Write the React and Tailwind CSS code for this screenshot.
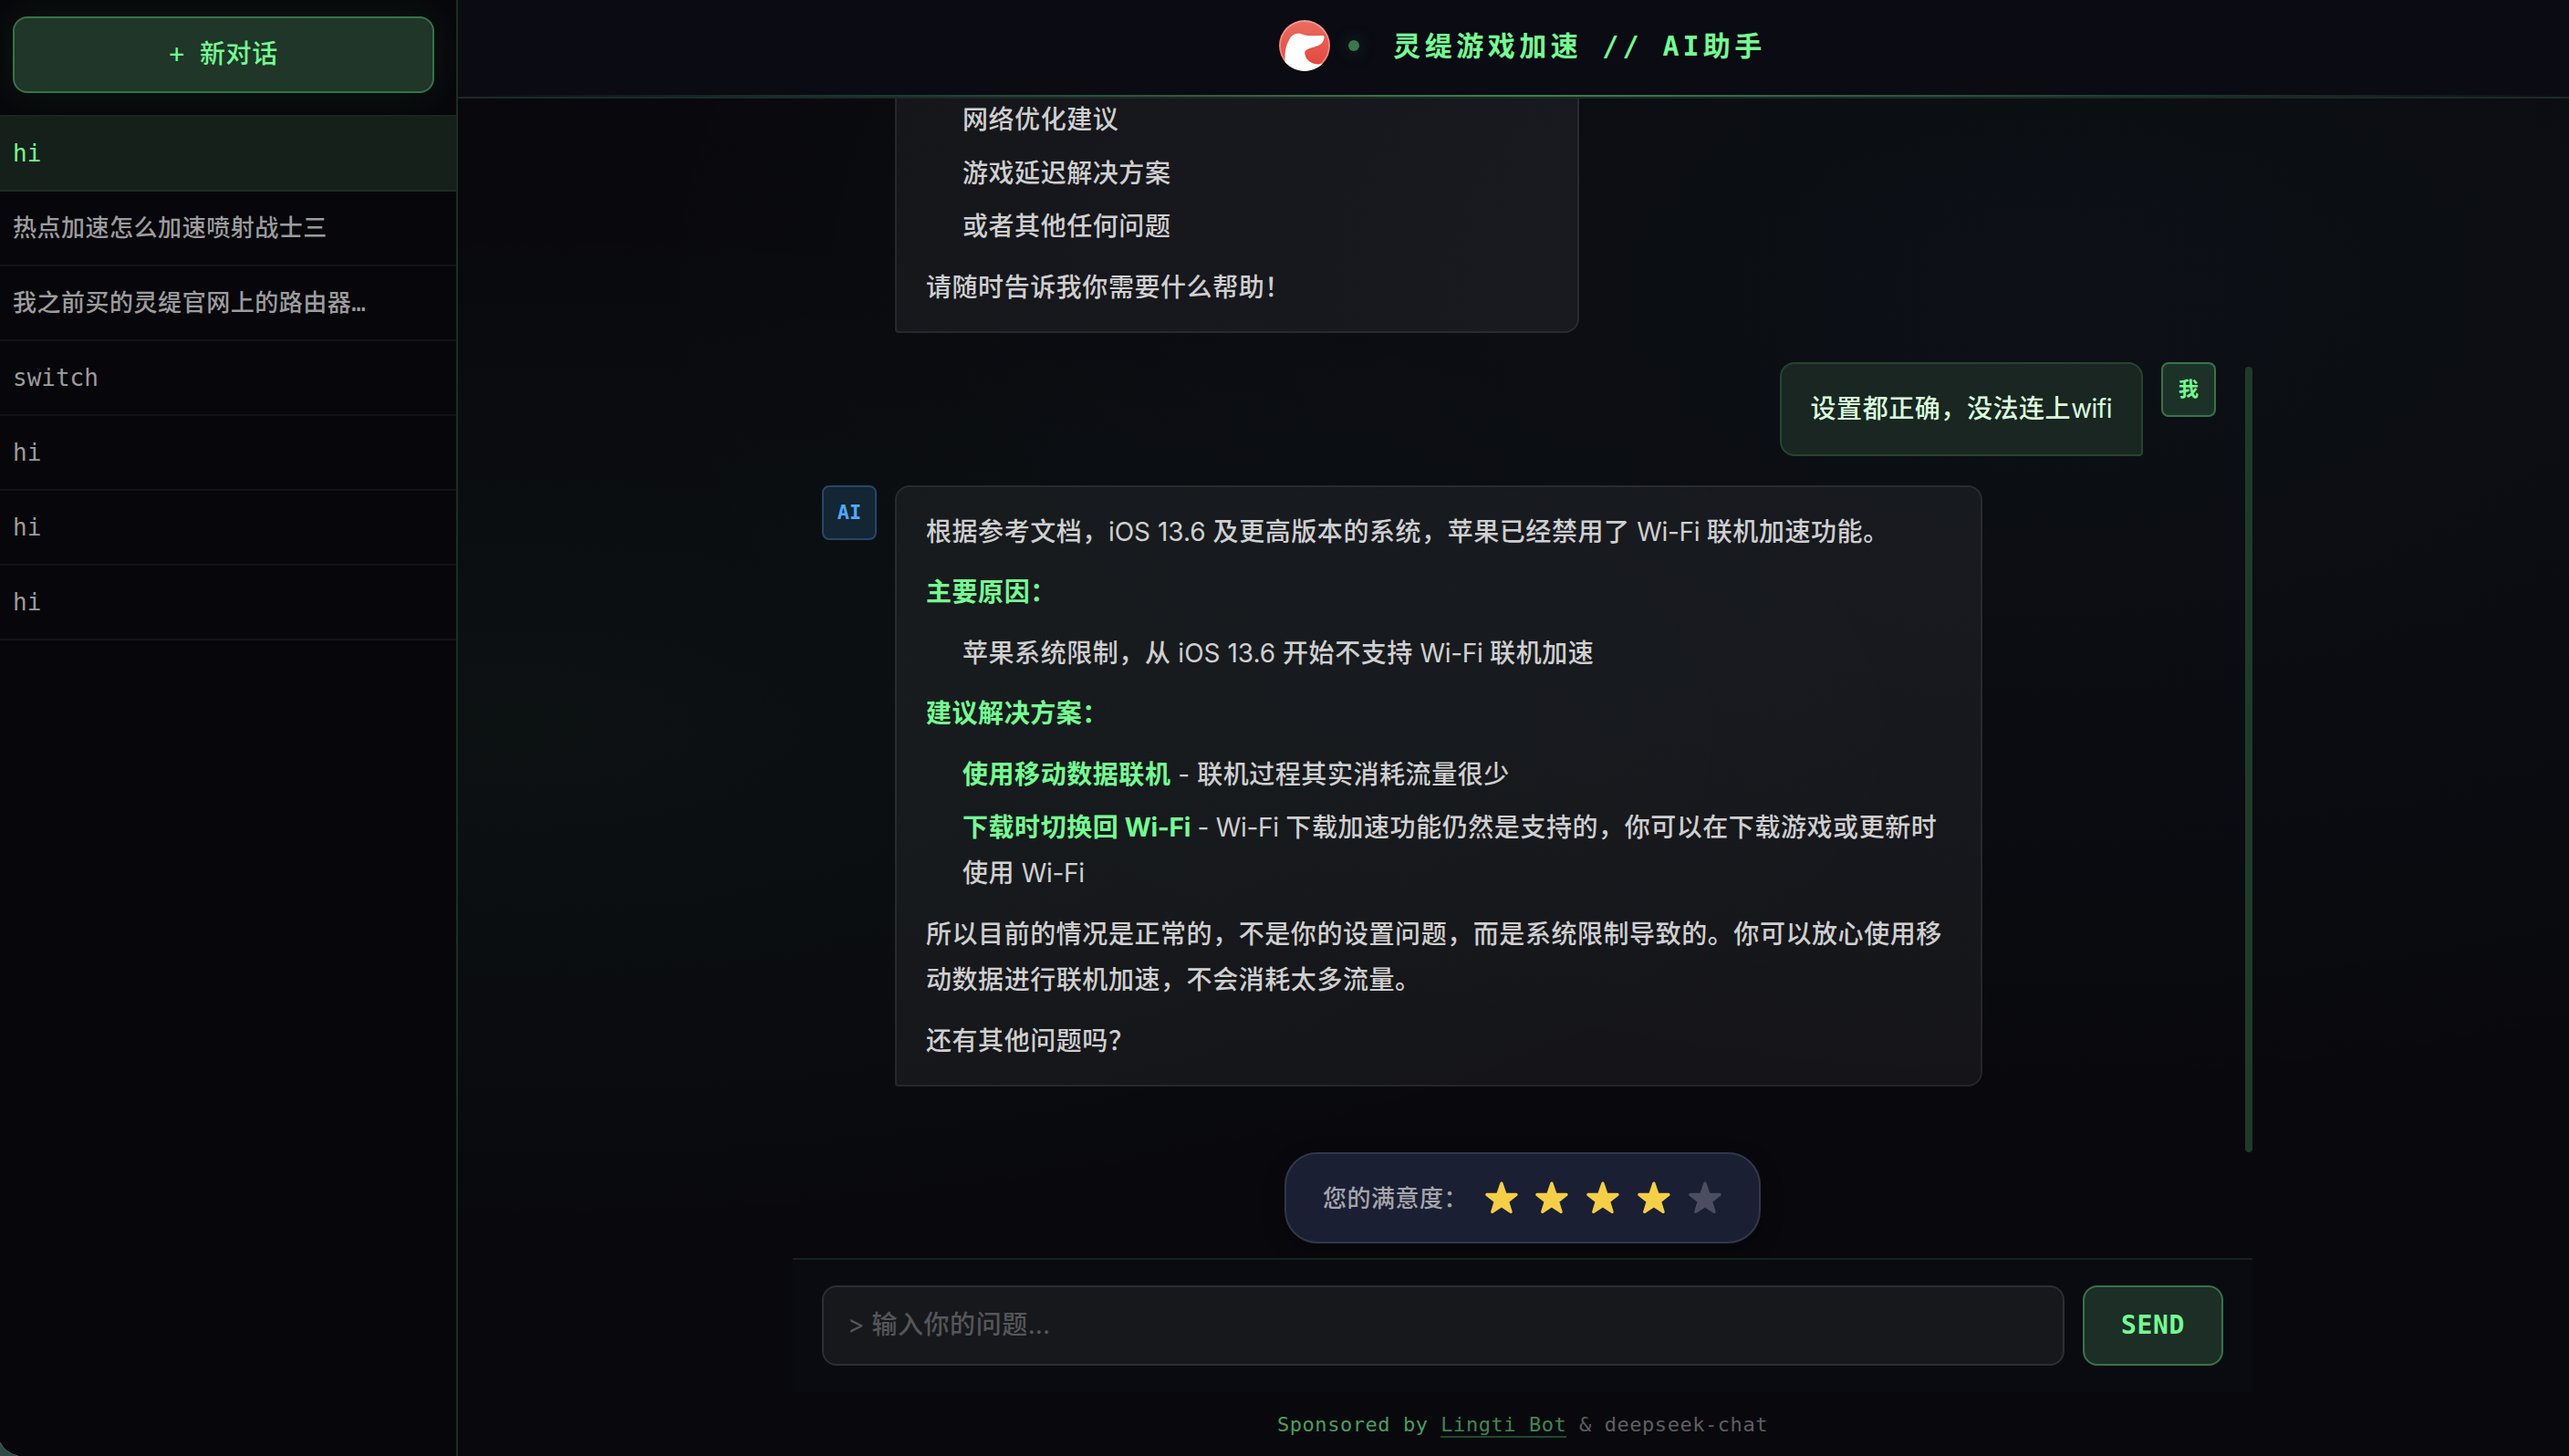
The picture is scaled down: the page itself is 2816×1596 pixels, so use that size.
import React from "react";

const sans = "font-['Inter','Noto_Sans_CJK_SC',sans-serif]";
const mono = "font-['DejaVu_Sans_Mono','Noto_Sans_CJK_SC',monospace]";

/* Splits mixed text so Latin runs and CJK runs carry their own tracking and weight. */
function Mixed({ children, latin = "tracking-normal", cjk = "tracking-[0.02em] font-medium" }) {
  const runs = children.match(/[\u0020-\u007e\u2026]+|[^\u0020-\u007e\u2026]+/g) || [];
  return runs.map((run, i) => {
    let style = cjk;
    if (/^[\u0020-\u007e\u2026]/.test(run)) style = latin;
    if (run.includes("Wi-Fi")) style = "tracking-[-0.3px]";
    if (run.includes("wifi")) style = "tracking-[-0.5px]";
    return (
      <span key={i} className={style}>
        {run}
      </span>
    );
  });
}

const chats = ["hi", "热点加速怎么加速喷射战士三", "我之前买的灵缇官网上的路由器…", "switch", "hi", "hi", "hi"];

function Sidebar() {
  return (
    <aside className={`${mono} flex h-full w-[502px] shrink-0 flex-col border-r-2 border-[#1c2e22] bg-[#07070b]`}>
      <div className="h-[128px] shrink-0 border-b-2 border-[#18281e] pt-[18px] pr-[24px] pl-[14px]">
        <button className="flex h-[84px] w-full items-center justify-center rounded-[16px] border-2 border-[#37734a] bg-[#1f3628] text-[28px] font-medium text-[#75fb92] shadow-[0_0_40px_rgba(117,251,146,0.08)]">
          <span className="whitespace-pre"><Mixed>+ 新对话</Mixed></span>
        </button>
      </div>
      <ul>
        {chats.map((chat, i) => (
          <li
            key={i}
            className={
              i === 0
                ? "flex h-[82px] items-center border-b-2 border-[#1f2b25] bg-[#15201a] pl-[14px] text-[26px] text-[#75fb92]"
                : "flex h-[82px] items-center border-b-2 border-[#131317] pl-[14px] text-[26px] text-[#9c9c9e]"
            }
          >
            <span className="whitespace-pre"><Mixed>{chat}</Mixed></span>
          </li>
        ))}
      </ul>
    </aside>
  );
}

function Logo() {
  return (
    <svg viewBox="0 0 56 56" className="size-[56px]">
      <defs>
        <linearGradient id="coral" x1="0" y1="0" x2="0" y2="1">
          <stop offset="0" stopColor="#ea6e60" />
          <stop offset="1" stopColor="#e3413a" />
        </linearGradient>
        <clipPath id="disc"><circle cx="28" cy="28" r="28" /></clipPath>
      </defs>
      <g clipPath="url(#disc)">
        <rect width="56" height="56" fill="url(#coral)" />
        <circle cx="28" cy="28" r="27" fill="none" stroke="#fff" strokeOpacity="0.3" strokeWidth="2" />
        <path d="M6.500 56V39C6.500 31 9.500 23.500 13 18.500C16 14.500 22 13.500 28 16.500C34 18 41 16.500 48.500 17C50.500 18 49.500 21.500 47.500 24.500C45 28 40 29 35 30.500C31 31.700 28 33.500 28.200 36.500C29 42 33 46.500 39 48C42.500 48.800 45 48.300 48 47.500L48 56Z" fill="#fff" />
      </g>
    </svg>
  );
}

function Header() {
  return (
    <header className="relative flex h-[108px] shrink-0 items-center justify-center border-b-2 border-[#1c2a25] bg-[#0a0b13] pb-[6px]">
      <Logo />
      <span className="ml-[20px] size-[12px] rounded-full bg-[#3b774c] shadow-[0_0_20px_rgba(117,251,146,0.25)]" />
      <h1 className={`${mono} ml-[37px] text-[30px] font-bold whitespace-pre text-[#75fb92]`}>
        <Mixed latin="tracking-[4px]" cjk="tracking-[4.5px]">灵缇游戏加速 // AI助手</Mixed>
      </h1>
      <div className="absolute inset-x-0 bottom-0 h-[2px] bg-linear-to-r from-transparent via-[#3f8053] to-transparent" />
    </header>
  );
}

function Avatar({ label, user }) {
  return (
    <div
      className={`${mono} flex size-[60px] shrink-0 items-center justify-center rounded-[8px] border-2 text-[22px] font-bold ${
        user ? "border-[#37734a] bg-[#1c3228] text-[#75fb92]" : "border-[#24476a] bg-[#142533] text-[#4fa8ff]"
      }`}
    >
      {label}
    </div>
  );
}

function P({ children }) {
  return <p className="text-[28px] leading-[50.4px]">{children}</p>;
}

function Strong({ children }) {
  return <strong className="font-bold text-[#75fb92]"><Mixed cjk="tracking-[0.02em]">{children}</Mixed></strong>;
}

function Bubble({ className, children }) {
  return (
    <div className={`flex flex-col gap-4 rounded-[16px] rounded-bl-[4px] border-2 border-white/8 bg-[#fffdf8]/5 px-[32px] pt-[24px] pb-[23px] text-[#cfcfd0] ${className}`}>
      {children}
    </div>
  );
}

function Messages() {
  return (
    <section className={`${sans} relative flex h-[1155px] shrink-0 flex-col justify-end gap-[32px] overflow-hidden px-[32px] pb-[72px]`}>
      <div className="flex gap-[20px]">
        <div className="w-[60px] shrink-0" />
        <Bubble className="w-[750px]">
          <ul className="flex flex-col gap-2 pl-[40px]">
            <li><P><Mixed>网络优化建议</Mixed></P></li>
            <li><P><Mixed>游戏延迟解决方案</Mixed></P></li>
            <li><P><Mixed>或者其他任何问题</Mixed></P></li>
          </ul>
          <P><Mixed>请随时告诉我你需要什么帮助！</Mixed></P>
        </Bubble>
      </div>

      <div className="flex justify-end gap-[20px] pr-[8px]">
        <div className="rounded-[16px] rounded-br-[4px] border-2 border-[#254630] bg-[#192621] px-[32px] py-[24px] text-[28px] leading-[51px] text-[#d9fedc]">
          <Mixed>设置都正确，没法连上wifi</Mixed>
        </div>
        <Avatar label="我" user />
      </div>

      <div className="flex gap-[20px]">
        <Avatar label="AI" />
        <Bubble className="w-[1192px]">
          <P><Mixed>根据参考文档，iOS 13.6 及更高版本的系统，苹果已经禁用了 Wi-Fi 联机加速功能。</Mixed></P>
          <P><Strong>主要原因：</Strong></P>
          <ul className="pl-[40px]">
            <li><P><Mixed>苹果系统限制，从 iOS 13.6 开始不支持 Wi-Fi 联机加速</Mixed></P></li>
          </ul>
          <P><Strong>建议解决方案：</Strong></P>
          <ul className="flex flex-col gap-2 pl-[40px]">
            <li><P><Strong>使用移动数据联机</Strong><Mixed>{" - 联机过程其实消耗流量很少"}</Mixed></P></li>
            <li>
              <P>
                <Strong>下载时切换回 Wi-Fi</Strong>
                <Mixed>{" - Wi-Fi 下载加速功能仍然是支持的，你可以在下载游戏或更新时"}</Mixed>
                <br />
                <Mixed>使用 Wi-Fi</Mixed>
              </P>
            </li>
          </ul>
          <P>
            <Mixed>所以目前的情况是正常的，不是你的设置问题，而是系统限制导致的。你可以放心使用移</Mixed>
            <br />
            <Mixed>动数据进行联机加速，不会消耗太多流量。</Mixed>
          </P>
          <P><Mixed>还有其他问题吗？</Mixed></P>
        </Bubble>
      </div>

      <div className="absolute right-0 bottom-0 h-[861px] w-[8px] rounded-full bg-[#203a2a]" />
    </section>
  );
}

function Star({ on }) {
  return (
    <svg viewBox="0 0 40 40" className="h-[40px] w-[39.8px]">
      <path
        d="M20 5L24.200 17.200L36.200 17.400L26.700 25L30.300 36.500L20 29.700L9.700 36.500L13.300 25L3.800 17.400L15.800 17.200Z"
        fill={on ? "#f4cf47" : "#4b4d60"}
        stroke={on ? "#f4cf47" : "#4b4d60"}
        strokeWidth="3.200"
        strokeLinejoin="round"
      />
    </svg>
  );
}

function Rating() {
  return (
    <div className={`${sans} mb-[16px] flex h-[100px] w-[522px] shrink-0 items-center self-center rounded-[36px] border-2 border-[#33364c] bg-[#1b1f33] pl-[40px] shadow-[0_8px_24px_rgba(0,0,0,0.3)]`}>
      <span className="w-[175.500px] text-[26px] whitespace-nowrap text-[#a4a5ac]"><Mixed>您的满意度：</Mixed></span>
      <div className="mb-[3px] flex gap-4">
        <Star on /><Star on /><Star on /><Star on /><Star />
      </div>
    </div>
  );
}

function Composer() {
  return (
    <div className="flex h-[146px] shrink-0 gap-[20px] border-t-2 border-[#14231e] bg-[#0a0b10] px-[32px] pt-[28px]">
      <div className={`${sans} flex h-[88px] w-[1362px] items-center rounded-[16px] border-2 border-[#2d2e33] bg-[#17181c] pb-[2px] pl-[26px] text-[28px] text-[#55565a]`}>
        <span className="whitespace-pre"><Mixed>{"> 输入你的问题..."}</Mixed></span>
      </div>
      <button className={`${mono} h-[88px] w-[154px] rounded-[16px] border-2 border-[#37734a] bg-[#1c2e25] text-[28px] font-bold tracking-[0.6px] text-[#75fb92]`}>
        SEND
      </button>
    </div>
  );
}

export default function App() {
  return (
    <div className="relative flex h-[1596px] w-[2816px] overflow-hidden bg-[#09090d] bg-[radial-gradient(ellipse_at_20%_50%,rgba(100,240,170,0.035),transparent_50%),radial-gradient(ellipse_at_80%_20%,rgba(100,190,240,0.04),transparent_50%)]">
      <Sidebar />
      <main className="flex w-[2334px] shrink-0 flex-col">
        <Header />
        <div className="flex w-[1600px] flex-col self-center">
          <Messages />
          <Rating />
          <Composer />
        </div>
        <footer className={`${mono} pt-[20px] text-center text-[22px] leading-[34px] tracking-[0.55px] whitespace-pre text-[#5f5f62]`}>
          <p>
            <span className="text-[#4a9e60]">Sponsored by </span>
            <a className="border-b-2 border-[#1f4a2e] text-[#3f8653]">Lingti Bot</a>
            <span> &amp; deepseek-chat</span>
          </p>
        </footer>
      </main>
      {/* rounded window corner */}
      <svg viewBox="0 0 20 16" className="absolute bottom-0 left-0 h-[16px] w-[20px]">
        <path d="M0 1Q6 13 20 16H0Z" fill="#2f4a42" />
        <path d="M0 1Q6 13 20 16" fill="none" stroke="#56595b" strokeWidth="1" />
      </svg>
    </div>
  );
}
